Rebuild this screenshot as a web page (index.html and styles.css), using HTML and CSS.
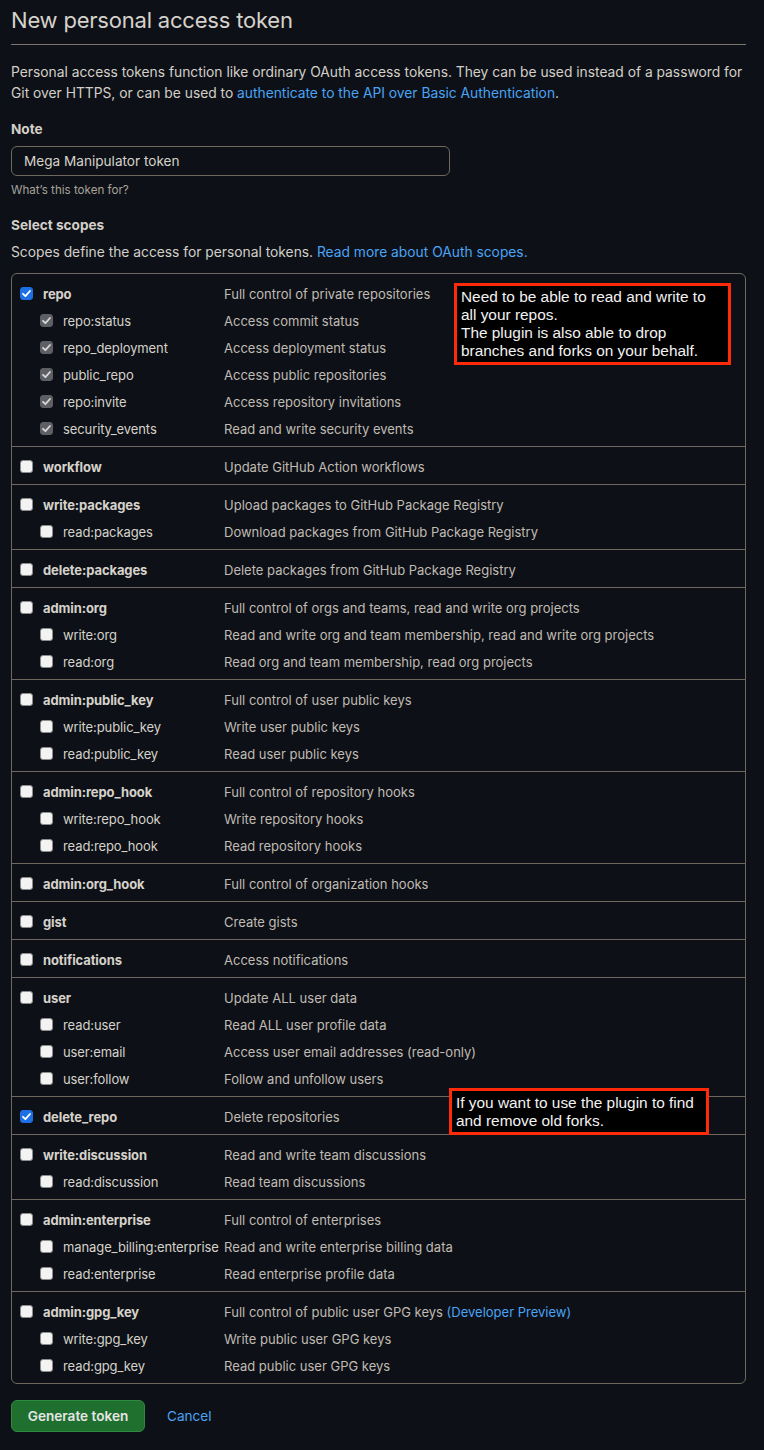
FILE: index.html
```html
<!DOCTYPE html>
<html>
<head>
<meta charset="utf-8">
<link rel="stylesheet" href="styles.css">
</head>
<body>
<div class="page">
  <h1 class="title">New personal access token</h1>
  <p class="intro">Personal access tokens function like ordinary OAuth access tokens. They can be used instead of a password for Git over HTTPS, or can be used to <a href="#">authenticate to the API over Basic Authentication</a>.</p>
  <div class="label">Note</div>
  <div class="input">Mega Manipulator token</div>
  <div class="hint">What’s this token for?</div>
  <div class="label label-scopes">Select scopes</div>
  <p class="scopes-note">Scopes define the access for personal tokens. <a href="#">Read more about OAuth scopes.</a></p>

  <div class="box">
    <div class="group">
      <div class="row"><span class="name"><span class="cb on"><svg viewBox="0 0 13 13"><path d="M3 6.8 5.4 9.2 10 4"/></svg></span><b>repo</b></span><span class="desc">Full control of private repositories</span></div>
      <div class="row sub"><span class="name"><span class="cb dis"><svg viewBox="0 0 13 13"><path d="M3 6.8 5.4 9.2 10 4"/></svg></span>repo:status</span><span class="desc">Access commit status</span></div>
      <div class="row sub"><span class="name"><span class="cb dis"><svg viewBox="0 0 13 13"><path d="M3 6.8 5.4 9.2 10 4"/></svg></span>repo_deployment</span><span class="desc">Access deployment status</span></div>
      <div class="row sub"><span class="name"><span class="cb dis"><svg viewBox="0 0 13 13"><path d="M3 6.8 5.4 9.2 10 4"/></svg></span>public_repo</span><span class="desc">Access public repositories</span></div>
      <div class="row sub"><span class="name"><span class="cb dis"><svg viewBox="0 0 13 13"><path d="M3 6.8 5.4 9.2 10 4"/></svg></span>repo:invite</span><span class="desc">Access repository invitations</span></div>
      <div class="row sub"><span class="name"><span class="cb dis"><svg viewBox="0 0 13 13"><path d="M3 6.8 5.4 9.2 10 4"/></svg></span>security_events</span><span class="desc">Read and write security events</span></div>
    </div>
    <div class="group">
      <div class="row"><span class="name"><span class="cb"></span><b>workflow</b></span><span class="desc">Update GitHub Action workflows</span></div>
    </div>
    <div class="group">
      <div class="row"><span class="name"><span class="cb"></span><b>write:packages</b></span><span class="desc">Upload packages to GitHub Package Registry</span></div>
      <div class="row sub"><span class="name"><span class="cb"></span>read:packages</span><span class="desc">Download packages from GitHub Package Registry</span></div>
    </div>
    <div class="group">
      <div class="row"><span class="name"><span class="cb"></span><b>delete:packages</b></span><span class="desc">Delete packages from GitHub Package Registry</span></div>
    </div>
    <div class="group">
      <div class="row"><span class="name"><span class="cb"></span><b>admin:org</b></span><span class="desc">Full control of orgs and teams, read and write org projects</span></div>
      <div class="row sub"><span class="name"><span class="cb"></span>write:org</span><span class="desc">Read and write org and team membership, read and write org projects</span></div>
      <div class="row sub"><span class="name"><span class="cb"></span>read:org</span><span class="desc">Read org and team membership, read org projects</span></div>
    </div>
    <div class="group">
      <div class="row"><span class="name"><span class="cb"></span><b>admin:public_key</b></span><span class="desc">Full control of user public keys</span></div>
      <div class="row sub"><span class="name"><span class="cb"></span>write:public_key</span><span class="desc">Write user public keys</span></div>
      <div class="row sub"><span class="name"><span class="cb"></span>read:public_key</span><span class="desc">Read user public keys</span></div>
    </div>
    <div class="group">
      <div class="row"><span class="name"><span class="cb"></span><b>admin:repo_hook</b></span><span class="desc">Full control of repository hooks</span></div>
      <div class="row sub"><span class="name"><span class="cb"></span>write:repo_hook</span><span class="desc">Write repository hooks</span></div>
      <div class="row sub"><span class="name"><span class="cb"></span>read:repo_hook</span><span class="desc">Read repository hooks</span></div>
    </div>
    <div class="group">
      <div class="row"><span class="name"><span class="cb"></span><b>admin:org_hook</b></span><span class="desc">Full control of organization hooks</span></div>
    </div>
    <div class="group">
      <div class="row"><span class="name"><span class="cb"></span><b>gist</b></span><span class="desc">Create gists</span></div>
    </div>
    <div class="group">
      <div class="row"><span class="name"><span class="cb"></span><b>notifications</b></span><span class="desc">Access notifications</span></div>
    </div>
    <div class="group">
      <div class="row"><span class="name"><span class="cb"></span><b>user</b></span><span class="desc">Update ALL user data</span></div>
      <div class="row sub"><span class="name"><span class="cb"></span>read:user</span><span class="desc">Read ALL user profile data</span></div>
      <div class="row sub"><span class="name"><span class="cb"></span>user:email</span><span class="desc">Access user email addresses (read-only)</span></div>
      <div class="row sub"><span class="name"><span class="cb"></span>user:follow</span><span class="desc">Follow and unfollow users</span></div>
    </div>
    <div class="group">
      <div class="row"><span class="name"><span class="cb on"><svg viewBox="0 0 13 13"><path d="M3 6.8 5.4 9.2 10 4"/></svg></span><b>delete_repo</b></span><span class="desc">Delete repositories</span></div>
    </div>
    <div class="group">
      <div class="row"><span class="name"><span class="cb"></span><b>write:discussion</b></span><span class="desc">Read and write team discussions</span></div>
      <div class="row sub"><span class="name"><span class="cb"></span>read:discussion</span><span class="desc">Read team discussions</span></div>
    </div>
    <div class="group">
      <div class="row"><span class="name"><span class="cb"></span><b>admin:enterprise</b></span><span class="desc">Full control of enterprises</span></div>
      <div class="row sub"><span class="name"><span class="cb"></span>manage_billing:enterprise</span><span class="desc">Read and write enterprise billing data</span></div>
      <div class="row sub"><span class="name"><span class="cb"></span>read:enterprise</span><span class="desc">Read enterprise profile data</span></div>
    </div>
    <div class="group">
      <div class="row"><span class="name"><span class="cb"></span><b>admin:gpg_key</b></span><span class="desc">Full control of public user GPG keys <a href="#">(Developer Preview)</a></span></div>
      <div class="row sub"><span class="name"><span class="cb"></span>write:gpg_key</span><span class="desc">Write public user GPG keys</span></div>
      <div class="row sub"><span class="name"><span class="cb"></span>read:gpg_key</span><span class="desc">Read public user GPG keys</span></div>
    </div>
  </div>

  <div class="actions">
    <button class="btn">Generate token</button>
    <a href="#" class="cancel">Cancel</a>
  </div>

  <div class="note note-repo">Need to be able to read and write to all your repos.<br>The plugin is also able to drop branches and forks on your behalf.</div>
  <div class="note note-delete">If you want to use the plugin to find and remove old forks.</div>
</div>
</body>
</html>
```

FILE: styles.css
```css
html, body {
  margin: 0;
  padding: 0;
  background: #0d1117;
}
body {
  font-family: Inter, "Noto Sans", "Liberation Sans", sans-serif;
  color: #d3cfc8;
  font-size: 14px;
}
a {
  color: #4aa3f5;
  text-decoration: none;
}
.page {
  position: relative;
  width: 735px;
  padding: 0 18px 20px 11px;
}
.title {
  margin: 0;
  padding: 5px 0 9px;
  font-size: 22px;
  font-weight: 400;
  line-height: 30px;
  letter-spacing: -0.2px;
  border-bottom: 1px solid #7c766c;
  color: #d6d2cb;
}
.intro {
  margin: 17px 0 0;
  line-height: 21px;
  font-size: 13.8px;
}
.label {
  margin-top: 15px;
  font-weight: 700;
  line-height: 21px;
  font-size: 13.6px;
}
.input {
  margin-top: 6px;
  width: 413px;
  height: 28px;
  padding: 0 12px;
  border: 1px solid #6e685f;
  border-radius: 6px;
  line-height: 28px;
  font-size: 13.6px;
  color: #d6d2cb;
  background: #0d1117;
}
.hint {
  margin-top: 5px;
  font-size: 11.6px;
  line-height: 18px;
  color: #a7a29a;
}
.label-scopes {
  margin-top: 16px;
}
.scopes-note {
  margin: 6px 0 0;
  line-height: 21px;
  font-size: 13.8px;
}
.box {
  margin-top: 10px;
  border: 1px solid #6e685f;
  border-radius: 6px;
}
.group {
  padding: 6px 0 4px;
  border-top: 1px solid #6e685f;
}
.group:first-child {
  border-top: none;
}
.row {
  display: flex;
  align-items: center;
  height: 27px;
  padding-left: 8px;
  font-size: 13px;
}
.row.sub {
  padding-left: 28px;
}
.name {
  display: flex;
  align-items: center;
  width: 204px;
  flex: none;
  white-space: nowrap;
  color: #d6d2cb;
  letter-spacing: -0.1px;
}
.row.sub .name {
  width: 184px;
}
.name b {
  font-weight: 700;
}
.desc {
  color: #c0bbb3;
  white-space: nowrap;
}
.cb {
  width: 13px;
  height: 13px;
  box-sizing: border-box;
  margin-right: 10px;
  border-radius: 3px;
  background: #f3f3f3;
  border: 1px solid #8c8c8c;
  flex: none;
  display: flex;
}
.cb svg {
  width: 13px;
  height: 13px;
  margin: -1px;
  fill: none;
  stroke: #fff;
  stroke-width: 1.8;
  stroke-linecap: round;
  stroke-linejoin: round;
}
.cb.on {
  background: #1d6fe6;
  border-color: #1d6fe6;
}
.cb.dis {
  background: #5d5f64;
  border-color: #5d5f64;
}
.cb.dis svg {
  stroke: #d8d8d8;
}
.actions {
  display: flex;
  align-items: center;
  margin-top: 16px;
}
.btn {
  width: 134px;
  height: 32px;
  border: 1px solid #2f8a3f;
  border-radius: 6px;
  background: #1f6f2f;
  color: #e6e6e6;
  font-family: inherit;
  font-weight: 600;
  font-size: 13.6px;
}
.cancel {
  margin-left: 22px;
  font-size: 13.6px;
}
.note {
  position: absolute;
  box-sizing: border-box;
  background: #000;
  border: 3px solid #fe2a0a;
  color: #f2f2f2;
  font-family: "Liberation Sans", Arial, sans-serif;
  font-size: 15.4px;
  line-height: 18px;
  padding: 2px 4px;
}
.note-repo {
  left: 454px;
  top: 283px;
  width: 277px;
  height: 82px;
}
.note-delete {
  left: 449px;
  top: 1088px;
  width: 260px;
  height: 47px;
  padding: 3px 4px;
}
```
